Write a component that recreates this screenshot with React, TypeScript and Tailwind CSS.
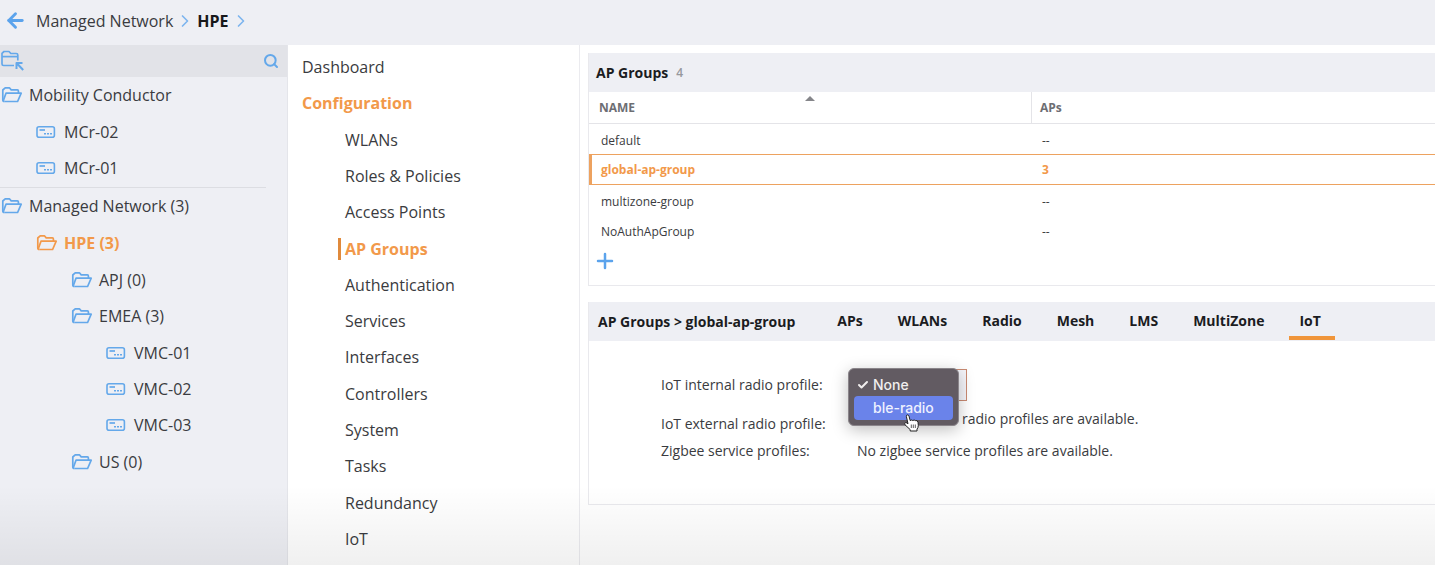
import { ArrowLeft, Check, ChevronRight, Plus, Search } from "lucide-react";

type TreeItem = {
  label: string;
  device?: boolean;
  active?: boolean;
  children?: TreeItem[];
};

const conductors: TreeItem = {
  label: "Mobility Conductor",
  children: [
    { label: "MCr-02", device: true },
    { label: "MCr-01", device: true },
  ],
};

const managed: TreeItem = {
  label: "Managed Network (3)",
  children: [
    {
      label: "HPE (3)",
      active: true,
      children: [
        { label: "APJ (0)" },
        {
          label: "EMEA (3)",
          children: [
            { label: "VMC-01", device: true },
            { label: "VMC-02", device: true },
            { label: "VMC-03", device: true },
          ],
        },
        { label: "US (0)" },
      ],
    },
  ],
};

const menu = [
  "WLANs",
  "Roles & Policies",
  "Access Points",
  "AP Groups",
  "Authentication",
  "Services",
  "Interfaces",
  "Controllers",
  "System",
  "Tasks",
  "Redundancy",
  "IoT",
];

const groups = [
  { name: "default", aps: "--" },
  { name: "global-ap-group", aps: "3" },
  { name: "multizone-group", aps: "--" },
  { name: "NoAuthApGroup", aps: "--" },
];

const tabs = ["APs", "WLANs", "Radio", "Mesh", "LMS", "MultiZone", "IoT"];

function FolderIcon() {
  return (
    <svg className="w-[22px] h-[18px] shrink-0" viewBox="0 0 22 18" fill="none" stroke="currentColor" strokeWidth="1.7" strokeLinejoin="round" aria-hidden="true">
      <path d="M4.300 15.500Q2.800 15.500 2.800 14V4L5.200 1.800h4.200l1.800 2.100h6.200q1 0 1 1v2.300" />
      <path d="M3.200 14.900 6 7.200h15.200l-3.600 8.300H4.300" />
    </svg>
  );
}

function DeviceIcon() {
  return (
    <svg className="w-[22px] h-[14px] shrink-0" viewBox="0 0 22 14" fill="none" stroke="currentColor" aria-hidden="true">
      <rect x="2" y="1.8" width="17.4" height="10.4" rx="2" strokeWidth="1.6" />
      <path d="M4.500 5h5.500" strokeWidth="1.700" />
      <path d="M9 8.700h8" strokeWidth="1.600" strokeDasharray="2 1" />
    </svg>
  );
}

function FolderSelectIcon() {
  return (
    <svg className="w-6 h-6" viewBox="0 0 24 24" fill="none" stroke="currentColor" strokeWidth="1.7" strokeLinejoin="round" aria-hidden="true">
      <path d="M14 16.500H3.600q-1.600 0-1.600-1.600V4.300l2-1.800h5l1.800 2h5.400q1.600 0 1.600 1.600v5.400" />
      <path d="M2 7.600h15.800" />
      <path d="M16.500 20v-6h6M17 14.500l6.200 6.500" strokeWidth="2" />
    </svg>
  );
}

function HandCursor() {
  return (
    <svg className="absolute left-[54px] top-[45px] w-[17px] h-[18px]" viewBox="0 0 17 18" aria-hidden="true">
      <path
        d="M5 9.800 3.400 2.600Q3.200 1 4.500.900 5.600.900 6 2.200L7.200 6.600Q8.800 5.400 9.800 6.500 11.300 5.400 12.300 6.600 14.500 5.900 15 8.200L15.300 11.500Q15.200 13.800 14 15.200V17H7.200V15.600L2 10.800Q1 9.200 2.600 8.700 3.500 8.500 5 9.800Z"
        fill="white"
        stroke="#222"
        strokeWidth="1"
        strokeLinejoin="round"
      />
      <path d="M8.300 10.500v3.500M10.300 10.500v3.500M12.300 10.500v3.500" stroke="#333" strokeWidth=".8" />
    </svg>
  );
}

function TreeNode({ item }: { item: TreeItem }) {
  return (
    <li>
      <a href="#" className={item.active ? "flex items-center gap-[7px] h-9 font-bold text-[#f2994a]" : "flex items-center gap-[7px] h-9"}>
        <span className={item.active ? "text-[#f2994a]" : "text-[#64a8ea]"}>
          {item.device ? <DeviceIcon /> : <FolderIcon />}
        </span>
        {item.label}
      </a>
      {item.children && (
        <ul className="py-px pl-[35px]">
          {item.children.map((child) => (
            <TreeNode key={child.label} item={child} />
          ))}
        </ul>
      )}
    </li>
  );
}

export default function App() {
  return (
    <div className="relative flex flex-col min-h-screen overflow-hidden bg-white font-['Open_Sans',sans-serif] text-base text-[#3a3b40]">
      <header className="flex items-center h-[45px] pb-1 pl-1 bg-[#eeeff4]">
        <button type="button" aria-label="Back" className="text-[#5ba3ec]">
          <ArrowLeft size={23} strokeWidth={3} />
        </button>
        <nav aria-label="Breadcrumb" className="flex items-center pl-[9px]">
          <a href="#">Managed Network</a>
          <ChevronRight size={20} className="mx-[2px] text-[#7db5ee]" />
          <a href="#" className="font-bold text-[#17181a]">HPE</a>
          <ChevronRight size={20} className="mx-[2px] text-[#7db5ee]" />
        </nav>
      </header>

      <div className="flex flex-1">
        <aside className="w-72 shrink-0 bg-[#eeeff4] border-r border-[#e4e5ea]">
          <div className="flex items-center justify-between h-8 pr-2 bg-[#e2e3e8] text-[#64a8ea]">
            <button type="button" aria-label="Select folder">
              <FolderSelectIcon />
            </button>
            <button type="button" aria-label="Search">
              <Search size={16} strokeWidth={3} />
            </button>
          </div>
          <ul className="mr-[21px] border-b border-[#dcdde2]">
            <TreeNode item={conductors} />
          </ul>
          <ul>
            <TreeNode item={managed} />
          </ul>
        </aside>

        <nav aria-label="Sections" className="flex flex-col w-[292px] shrink-0 pt-1 pb-2 pl-[14px] border-r border-[#ebebef]">
          <a href="#" className="flex flex-1 items-center">Dashboard</a>
          <a href="#" className="flex flex-1 items-center font-bold text-[#f2994a]">Configuration</a>
          {menu.map((name) =>
            name === "AP Groups" ? (
              <a key={name} href="#" aria-current="page" className="flex flex-1 items-center pl-9 font-bold text-[#f2994a]">
                <span className="pl-1 border-l-3 border-[#e08a3c] leading-[22px]">{name}</span>
              </a>
            ) : (
              <a key={name} href="#" className="flex flex-1 items-center pl-[43px]">{name}</a>
            )
          )}
        </nav>

        <main className="flex-1 min-w-0 pt-2 pl-2 text-sm">
          <section className="border-l border-b border-[#e9e9ed]">
            <h2 className="flex items-center gap-2 h-[39px] px-[7px] bg-[#eeeff4] font-bold text-[#1b1c1f]">
              AP Groups <span className="text-xs font-semibold text-[#97989d]">4</span>
            </h2>
            <table className="w-full text-xs border-separate border-spacing-0">
              <thead>
                <tr className="h-8 text-left text-[#6d6e73]">
                  <th className="relative w-[443px] pl-[10px] font-bold border-b border-r border-[#e4e4e8]">
                    NAME
                    <svg className="absolute inset-x-0 mx-auto top-1 w-[10px] h-[5px]" viewBox="0 0 10 5" aria-hidden="true">
                      <path d="M0 5 5 0l5 5z" fill="#85868a" />
                    </svg>
                  </th>
                  <th className="pl-2 font-bold border-b border-[#e4e4e8]">APs</th>
                </tr>
              </thead>
              <tbody>
                {groups.map((g) =>
                  g.name === "global-ap-group" ? (
                    <tr key={g.name} className="h-[31px] font-bold text-[#f2994a]">
                      <td className="pl-[9px] border-y border-l-3 border-[#eda25f]">{g.name}</td>
                      <td className="pl-[10px] border-y border-[#eda25f]">{g.aps}</td>
                    </tr>
                  ) : (
                    <tr key={g.name} className="h-[30px]">
                      <td className="pt-1 pl-3">{g.name}</td>
                      <td className="pt-1 pl-[10px]">{g.aps}</td>
                    </tr>
                  )
                )}
              </tbody>
            </table>
            <button type="button" aria-label="Add AP group" className="flex items-center h-10 pl-1 pb-2 text-[#5ba3ec]">
              <Plus size={24} strokeWidth={2.5} />
            </button>
          </section>

          <section className="mt-4 border-l border-b border-[#e9e9ed]">
            <div className="flex items-center h-[39px] pl-[9px] bg-[#eeeff4] font-bold text-[#1b1c1f] whitespace-nowrap">
              <h2>AP Groups &gt; global-ap-group</h2>
              <div role="tablist" className="flex gap-[11px] self-stretch pb-px ml-8">
                {tabs.map((tab) => (
                  <button
                    key={tab}
                    type="button"
                    role="tab"
                    aria-selected={tab === "IoT"}
                    className={
                      tab === "IoT"
                        ? "pl-[10px] pr-[14px] border-y-4 border-t-transparent border-b-[#f0953a]"
                        : "pl-[10px] pr-[14px] border-y-4 border-transparent"
                    }
                  >
                    {tab}
                  </button>
                ))}
              </div>
            </div>

            <div className="grid grid-cols-[196px_1fr] pt-7 pb-10 pl-[72px]">
              <label htmlFor="internal" className="h-[41px] leading-8">IoT internal radio profile:</label>
              <div className="relative">
                <select id="internal" className="w-[110px] h-8 px-2 bg-[#f4f4f9] border border-[#c98a72] appearance-none">
                  <option>None</option>
                  <option>ble-radio</option>
                </select>
                <div role="listbox" aria-label="IoT internal radio profile" className="absolute -left-[9px] -top-px w-[111px] p-[5px] rounded-md bg-[#625b62] border border-[#8a858a] shadow-[0_4px_16px_rgba(0,0,0,0.25)] font-['Inter',sans-serif] font-medium">
                  <button type="button" role="option" aria-selected="true" className="flex items-center gap-1 w-full h-[22px] pl-[3px] text-[#f1eeee]">
                    <Check size={12} strokeWidth={4} />
                    None
                  </button>
                  <button type="button" role="option" aria-selected="false" className="block w-full h-6 pl-[19px] rounded-sm bg-[#6a83ea] text-left text-[#eef1ff]">
                    ble-radio
                  </button>
                  <HandCursor />
                </div>
              </div>
              <span className="h-[27px] leading-[27px]">IoT external radio profile:</span>
              <span className="pl-[105px] leading-[18px]">radio profiles are available.</span>
              <span className="h-[27px] leading-[27px]">Zigbee service profiles:</span>
              <span className="leading-[27px]">No zigbee service profiles are available.</span>
            </div>
          </section>
        </main>
      </div>

      <div className="absolute inset-x-0 bottom-0 h-20 pointer-events-none bg-linear-to-t from-black/6 to-transparent" />
    </div>
  );
}
